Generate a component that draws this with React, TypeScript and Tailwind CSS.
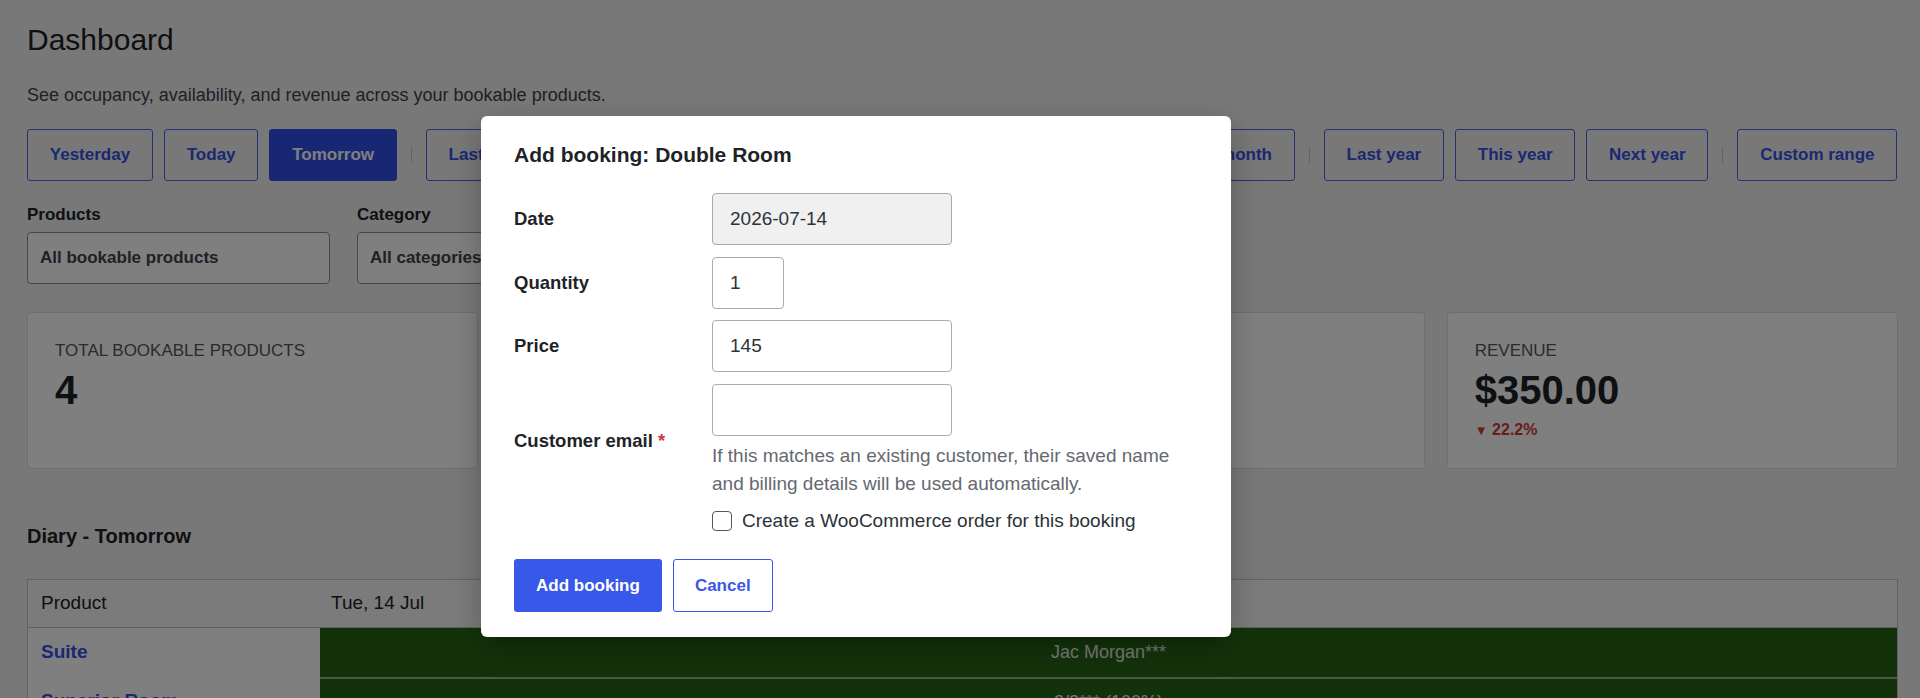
import React from 'react';

const rangeGroups = [
  ['Yesterday', 'Today', 'Tomorrow'],
  ['Last week', 'This week', 'Next week'],
  ['Last month', 'This month', 'Next month'],
  ['Last year', 'This year', 'Next year'],
  ['Custom range'],
];

const stats = [
  { label: 'Total bookable products', value: '4' },
  { label: 'Occupancy', value: '50%' },
  { label: 'Bookings', value: '2' },
  { label: 'Revenue', value: '$350.00', change: '22.2%' },
];

const diary = [
  { product: 'Suite', cell: 'Jac Morgan***' },
  { product: 'Superior Room', cell: '2/2*** (100%)' },
  { product: 'Double Room', cell: '' },
];

const App = () => {
  return (
    <div className="relative h-[698px] w-full overflow-hidden bg-[#f0f0f1] font-['Liberation_Sans',Arial,sans-serif] text-[#1d2327]">
      {/* Page */}
      <div className="pl-[27px] pr-[22px] pt-[22px]">
        <h1 className="text-[30px] leading-[36px]">Dashboard</h1>
        <p className="mt-[25px] text-[18px] leading-[24px] text-[#3c434a]">
          See occupancy, availability, and revenue across your bookable products.
        </p>

        {/* Date ranges */}
        <div className="mt-[22px] flex items-center gap-[11px]">
          {rangeGroups.map((group, gi) => (
            <React.Fragment key={gi}>
              {gi > 0 && <span className="mx-[3px] h-[16px] w-px shrink-0 bg-[#c3c4c7]" />}
              {group.map((label) =>
                label === 'Tomorrow' ? (
                  <div
                    key={label}
                    className="flex h-[52px] shrink-0 items-center whitespace-nowrap rounded-[3px] border border-[#2f4fe6] bg-[#2f4fe6] px-[21.8px] text-[17px] font-bold text-white"
                  >
                    {label}
                  </div>
                ) : (
                  <div
                    key={label}
                    className="flex h-[52px] shrink-0 items-center whitespace-nowrap rounded-[3px] border border-[#4a63e0] px-[21.8px] text-[17px] font-bold text-[#3452e0]"
                  >
                    {label}
                  </div>
                )
              )}
            </React.Fragment>
          ))}
        </div>

        {/* Filters */}
        <div className="mt-[23px] flex gap-[27px]">
          <div>
            <div className="text-[17px] font-bold leading-[22px]">Products</div>
            <div className="mt-[6px] flex h-[52px] w-[303px] items-center rounded-[4px] border border-[#8c8f94] bg-white px-[12px] text-[17px] font-bold text-[#3c434a]">
              All bookable products
            </div>
          </div>
          <div>
            <div className="text-[17px] font-bold leading-[22px]">Category</div>
            <div className="mt-[6px] flex h-[52px] w-[303px] items-center rounded-[4px] border border-[#8c8f94] bg-white px-[12px] text-[17px] font-bold text-[#3c434a]">
              All categories
            </div>
          </div>
        </div>

        {/* Stats */}
        <div className="mt-[28px] grid grid-cols-4 gap-[22px]">
          {stats.map((s) => (
            <div key={s.label} className="h-[157px] rounded-[4px] border border-[#dcdcde] bg-white px-[27px] pt-[27px]">
              <div className="text-[17px] uppercase leading-[22px] text-[#50575e]">{s.label}</div>
              <div className="mt-[4px] text-[40px] font-bold leading-[48px] text-[#1d2327]">{s.value}</div>
              {s.change && (
                <div className="mt-[6px] text-[16px] font-bold leading-[20px] text-[#d63638]">
                  <span className="text-[13px]">▼</span> {s.change}
                </div>
              )}
            </div>
          ))}
        </div>

        {/* Diary */}
        <h2 className="mt-[53px] text-[20px] font-bold leading-[28px]">Diary - Tomorrow</h2>
        <div className="mt-[29px] border border-[#c3c4c7] bg-white">
          <div className="grid h-[48px] grid-cols-[292px_1fr] items-center border-b border-[#c3c4c7] bg-[#f6f7f7] text-[19px]">
            <div className="px-[13px]">Product</div>
            <div className="px-[11px]">Tue, 14 Jul</div>
          </div>
          {diary.map((row, i) => (
            <div key={row.product} className="grid h-[49px] grid-cols-[292px_1fr]">
              <div className="flex items-center px-[13px] text-[19px] font-bold text-[#3452e0]">{row.product}</div>
              <div
                className={
                  i === 0
                    ? 'flex items-center justify-center bg-[#276515] text-[18px] text-white/90'
                    : 'flex items-center justify-center border-t-2 border-[#9bb38f] bg-[#276515] text-[18px] text-white/90'
                }
              >
                {row.cell}
              </div>
            </div>
          ))}
        </div>
      </div>

      {/* Overlay */}
      <div className="absolute inset-0 bg-black/50" />

      {/* Modal */}
      <div className="absolute left-[481px] top-[116px] w-[750px] rounded-[6px] bg-white px-[33px] pb-[25px] pt-[25px] shadow-[0_10px_30px_rgba(0,0,0,0.25)]">
        <h2 className="text-[21px] font-bold leading-[28px] text-[#1d2327]">Add booking: Double Room</h2>

        <div className="mt-[24px] grid grid-cols-[198px_1fr] items-center gap-y-[11.5px] text-[#1d2327]">
          <div className="text-[18.5px] font-bold">Date</div>
          <input
            readOnly
            value="2026-07-14"
            className="h-[52px] w-[240px] rounded-[4px] border border-[#a7aaad] bg-[#f0f0f0] px-[17px] text-[19px] text-[#2c3338] outline-none"
          />

          <div className="text-[18.5px] font-bold">Quantity</div>
          <input
            readOnly
            value="1"
            className="h-[52px] w-[72px] rounded-[4px] border border-[#a7aaad] bg-white px-[17px] text-[19px] text-[#2c3338] outline-none"
          />

          <div className="text-[18.5px] font-bold">Price</div>
          <input
            readOnly
            value="145"
            className="h-[52px] w-[240px] rounded-[4px] border border-[#a7aaad] bg-white px-[17px] text-[19px] text-[#2c3338] outline-none"
          />

          <div className="text-[18.5px] font-bold">
            Customer email <span className="text-[#d63638]">*</span>
          </div>
          <div>
            <input
              readOnly
              value=""
              className="block h-[52px] w-[240px] rounded-[4px] border border-[#a7aaad] bg-white px-[17px] text-[19px] outline-none"
            />
            <p className="mt-[6px] text-[19px] leading-[28px] text-[#646970]">
              If this matches an existing customer, their saved name and billing details will be used automatically.
            </p>
          </div>

          <div />
          <label className="flex h-[24px] items-center gap-[10px] text-[19px] text-[#2c3338]">
            <input
              type="checkbox"
              readOnly
              className="h-[20px] w-[20px] appearance-none rounded-[4px] border-[1.5px] border-[#50575e] bg-white"
            />
            Create a WooCommerce order for this booking
          </label>
        </div>

        <div className="mt-[26px] flex gap-[11px]">
          <div className="flex h-[53px] items-center rounded-[3px] bg-[#3858e9] px-[22px] text-[17px] font-bold text-white">
            Add booking
          </div>
          <div className="flex h-[53px] items-center rounded-[3px] border border-[#3858e9] bg-white px-[21px] text-[17px] font-bold text-[#3858e9]">
            Cancel
          </div>
        </div>
      </div>
    </div>
  );
};

export default App;
